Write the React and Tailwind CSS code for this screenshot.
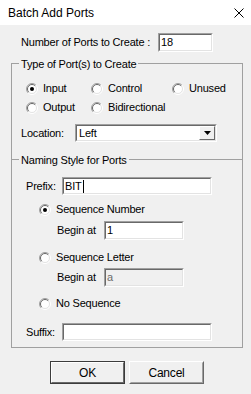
// Batch Add Ports — classic Windows dialog.

function Radio({ checked }) {
  return (
    <svg width="12" height="12" viewBox="0 0 12 12" className="shrink-0">
      <circle cx="6" cy="6" r="5" fill="#ffffff" />
      <path d="M2.1 9.9 A5.5 5.5 0 0 1 9.9 2.1" fill="none" stroke="#a0a0a0" />
      <path d="M9.9 2.1 A5.5 5.5 0 0 1 2.1 9.9" fill="none" stroke="#ffffff" />
      <path d="M2.8 9.2 A4.5 4.5 0 0 1 9.2 2.8" fill="none" stroke="#696969" />
      <path d="M9.2 2.8 A4.5 4.5 0 0 1 2.8 9.2" fill="none" stroke="#e3e3e3" />
      {checked && <circle cx="6" cy="6" r="2" fill="#000000" />}
    </svg>
  );
}

function RadioItem({ label, checked, className = "" }) {
  return (
    <div className={`flex items-center gap-[5px] h-[19px] ${className}`}>
      <Radio checked={checked} />
      <span>{label}</span>
    </div>
  );
}

function Edit({ value, disabled, caret, className = "" }) {
  return (
    <div
      className={`border border-t-[#a0a0a0] border-l-[#a0a0a0] border-b-white border-r-white ${className}`}
    >
      <div
        className={`h-full border border-t-[#696969] border-l-[#696969] border-b-[#e3e3e3] border-r-[#e3e3e3] flex items-center pl-[1px] ${
          disabled ? "bg-[#f0f0f0] text-[#6d6d6d]" : "bg-white text-black"
        }`}
      >
        <span>{value}</span>
        {caret && <span className="w-px h-[13px] bg-black ml-px" />}
      </div>
    </div>
  );
}

function Button({ label, isDefault }) {
  return (
    <div
      className={`w-[75px] h-[23px] border ${
        isDefault
          ? "border-[#3c3c3c]"
          : "border-t-white border-l-white border-b-[#696969] border-r-[#696969]"
      }`}
    >
      <div
        className={`h-full border ${
          isDefault
            ? "border-t-white border-l-white border-b-[#696969] border-r-[#696969]"
            : "border-t-[#f0f0f0] border-l-[#f0f0f0] border-b-[#a0a0a0] border-r-[#a0a0a0]"
        } bg-[#f0f0f0] flex items-center justify-center text-[12px]`}
      >
        {label}
      </div>
    </div>
  );
}

export default function App() {
  return (
    <div className="w-[251px] h-[394px] bg-[#f0f0f0] text-black text-[11px] tracking-[-0.2px] font-['Liberation_Sans',Arial,sans-serif] flex flex-col overflow-hidden">
      <div className="h-[25px] bg-white flex items-center justify-between pl-[8px] pr-[7px] shrink-0">
        <span className="text-[12px] tracking-normal">Batch Add Ports</span>
        <svg width="10" height="10" viewBox="0 0 10 10">
          <path d="M0.5 0.5 L9.5 9.5 M9.5 0.5 L0.5 9.5" stroke="#000" strokeWidth="1" />
        </svg>
      </div>

      <div className="mt-[8px] flex items-center h-[19px] pl-[21px]">
        <span className="w-[137px]">Number of Ports to Create :</span>
        <Edit value="18" className="w-[55px] h-[19px]" />
      </div>

      {/* Type of Port(s) to Create */}
      <div className="relative mt-[11px] ml-[11px] w-[232px] h-[96px] border-t border-l border-r border-[#a0a0a0] shrink-0">
        <span className="absolute -top-[8px] left-[7px] px-[2px] bg-[#f0f0f0]">Type of Port(s) to Create</span>
        <div className="mt-[15px] pl-[14px] flex">
          <RadioItem label="Input" checked className="w-[65px]" />
          <RadioItem label="Control" className="w-[81px]" />
          <RadioItem label="Unused" />
        </div>
        <div className="pl-[14px] flex">
          <RadioItem label="Output" className="w-[65px]" />
          <RadioItem label="Bidirectional" />
        </div>
        <div className="mt-[7px] pl-[9px] flex items-center h-[18px]">
          <span className="w-[54px]">Location:</span>
          <div className="w-[142px] h-[18px] border border-t-[#a0a0a0] border-l-[#a0a0a0] border-b-white border-r-white">
            <div className="h-full bg-white flex items-center pl-[2px] border border-t-[#696969] border-l-[#696969] border-b-[#e3e3e3] border-r-[#e3e3e3]">
              <span className="flex-1">Left</span>
              <div className="w-[16px] h-full border border-t-white border-l-white border-b-[#696969] border-r-[#696969] bg-[#f0f0f0] flex items-center justify-center">
                <svg width="7" height="4" viewBox="0 0 7 4">
                  <path d="M0 0 H7 L3.5 4 Z" fill="#000" />
                </svg>
              </div>
            </div>
          </div>
        </div>
      </div>

      {/* Naming Style for Ports */}
      <div className="relative ml-[11px] w-[232px] h-[189px] border border-[#a0a0a0] shrink-0">
        <span className="absolute -top-[8px] left-[7px] px-[2px] bg-[#f0f0f0]">Naming Style for Ports</span>
        <div className="mt-[17px] pl-[14px] flex items-center h-[18px]">
          <span className="w-[36px]">Prefix:</span>
          <Edit value="BIT" caret className="w-[150px] h-[18px]" />
        </div>
        <RadioItem label="Sequence Number" checked className="mt-[5px] pl-[27px]" />
        <div className="mt-[2px] pl-[45px] flex items-center h-[19px]">
          <span className="w-[47px]">Begin at</span>
          <Edit value="1" className="w-[80px] h-[19px]" />
        </div>
        <RadioItem label="Sequence Letter" className="mt-[8px] pl-[27px]" />
        <div className="mt-[1px] pl-[45px] flex items-center h-[19px]">
          <span className="w-[47px]">Begin at</span>
          <Edit value="a" disabled className="w-[80px] h-[19px]" />
        </div>
        <RadioItem label="No Sequence" className="mt-[7px] pl-[27px]" />
        <div className="mt-[10px] pl-[14px] flex items-center h-[18px]">
          <span className="w-[36px]">Suffix:</span>
          <Edit value="" className="w-[150px] h-[18px]" />
        </div>
      </div>

      <div className="mt-[13px] pl-[50px] flex gap-[4px]">
        <Button label="OK" isDefault />
        <Button label="Cancel" />
      </div>
    </div>
  );
}
